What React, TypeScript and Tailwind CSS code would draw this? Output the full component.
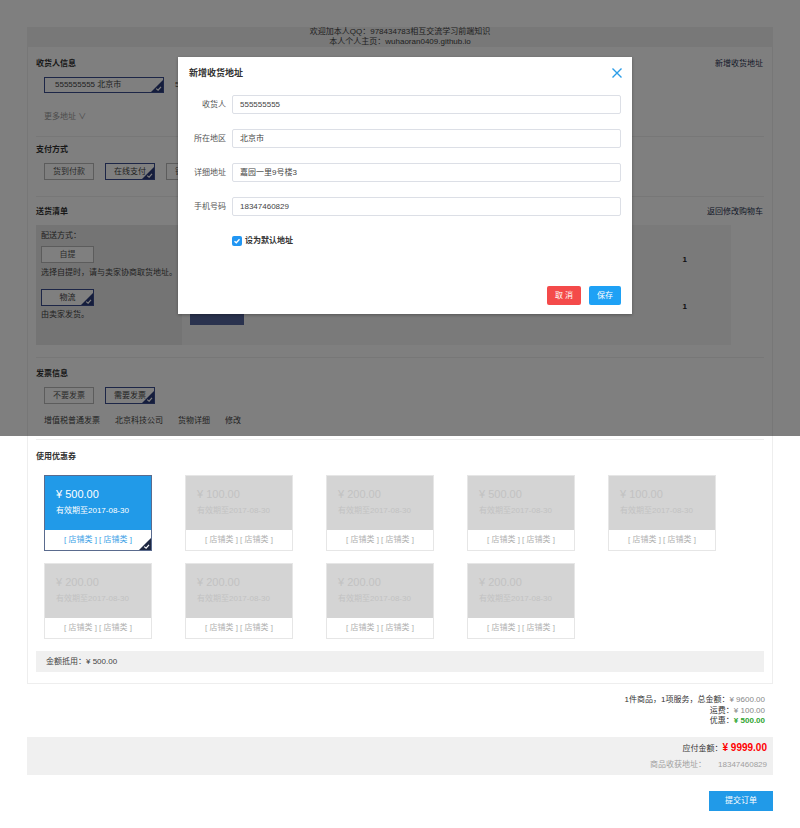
import React from 'react';

const Corner = ({ color = '#2b3a78' }: { color?: string }) => (
  <svg className="absolute bottom-0 right-0" width="12" height="12" viewBox="0 0 12 12">
    <polygon points="12,0 12,12 0,12" fill={color} />
    <polyline points="5.2,8.6 7.1,10.2 10,6.8" fill="none" stroke="#fff" strokeWidth="1.2" />
  </svg>
);

const OptionBtn = ({ label, active = false, w = 'w-[50px]' }: { label: string; active?: boolean; w?: string }) => (
  <div
    className={`relative ${w} h-[17px] shrink-0 border text-center leading-[15px] text-[8px] ${
      active ? 'border-[#3b4d8f] text-[#444]' : 'border-[#b8b8b8] text-[#555]'
    } bg-white`}
  >
    {label}
    {active && <Corner />}
  </div>
);

const coupons = [
  { amount: '500.00', active: true },
  { amount: '100.00' },
  { amount: '200.00' },
  { amount: '500.00' },
  { amount: '100.00' },
  { amount: '200.00' },
  { amount: '200.00' },
  { amount: '200.00' },
  { amount: '200.00' },
];

const Coupon = ({ amount, active }: { amount: string; active?: boolean }) => (
  <div
    className={`relative w-[108px] h-[76px] border flex flex-col ${
      active ? 'border-[#5a6b8e]' : 'border-[#e6e6e6]'
    }`}
  >
    <div className={`h-[54px] pl-[11px] pt-[11px] ${active ? 'bg-[#219ae8] text-white' : 'bg-[#d4d4d4] text-[#c2c2c2]'}`}>
      <div className="text-[11px] leading-[14px]">¥ {amount}</div>
      <div className="text-[8px] leading-[10px] mt-[5px]">有效期至2017-08-30</div>
    </div>
    <div className={`flex-1 bg-white text-center text-[8px] leading-[20px] ${active ? 'text-[#3d9fe6]' : 'text-[#b0b0b0]'}`}>
      [ 店铺类 ] [ 店铺类 ]
    </div>
    {active && <Corner color="#1e2842" />}
  </div>
);

const FormRow = ({ label, value }: { label: string; value: string }) => (
  <div className="flex items-center">
    <div className="w-[48px] text-right text-[8px] text-[#555]">{label}</div>
    <div className="ml-[6px] w-[389px] h-[19px] border border-[#dcdfe6] rounded-[2px] pl-[7px] text-[8px] leading-[17px] text-[#444]">
      {value}
    </div>
  </div>
);

export default function App() {
  return (
    <div className="relative h-[828px] w-[800px] bg-white text-[#333] text-[8px] font-['Liberation_Sans','Noto_Sans_CJK_SC',sans-serif]">
      <div className="pt-[27px] px-[27px]">
        {/* top banner */}
        <div className="h-[20px] bg-[#f0f0f0] text-center text-[8px] leading-[10px] text-[#444]">
          <div>欢迎加本人QQ：978434783相互交流学习前端知识</div>
          <div>本人个人主页：wuhaoran0409.github.io</div>
        </div>

        <div className="border border-t-0 border-[#eeeeee]">
          {/* 收货人信息 */}
          <div className="mx-[8px] pt-[12px] pb-[14px] border-b border-[#eeeeee]">
            <div className="flex justify-between leading-[10px]">
              <span className="font-bold">收货人信息</span>
              <span className="text-[#2b3352] mr-[1px]">新增收货地址</span>
            </div>
            <div className="flex mt-[8px] ml-[8px]">
              <div className="relative w-[120px] h-[16px] border border-[#3b4d8f] pl-[10px] leading-[14px] text-[#444]">
                555555555 北京市
                <Corner />
              </div>
              <div className="w-[120px] h-[16px] border border-transparent pl-[10px] leading-[14px] text-[#444]">
                555555555 北京市
              </div>
            </div>
            <div className="mt-[19px] ml-[8px] leading-[10px] text-[#9a9a9a]">更多地址 ∨</div>
          </div>

          {/* 支付方式 */}
          <div className="mx-[8px] pt-[8px] pb-[16px] border-b border-[#eeeeee]">
            <div className="font-bold leading-[10px]">支付方式</div>
            <div className="flex gap-[11px] mt-[8px] ml-[8px]">
              <OptionBtn label="货到付款" />
              <OptionBtn label="在线支付" active />
              <OptionBtn label="银联支付" />
            </div>
          </div>

          {/* 送货清单 */}
          <div className="mx-[8px] pt-[10px] pb-[12px] border-b border-[#eeeeee]">
            <div className="flex justify-between leading-[10px]">
              <span className="font-bold">送货清单</span>
              <span className="text-[#2b3352] mr-[1px]">返回修改购物车</span>
            </div>
            <div className="flex mt-[8px] h-[120px]">
              <div className="w-[146px] bg-[#e9e9e9] pl-[5px] pt-[6px] leading-[10px] text-[#444]">
                <div>配送方式：</div>
                <div className="mt-[5px]">
                  <OptionBtn label="自提" w="w-[53px]" />
                </div>
                <div className="mt-[5px]">选择自提时，请与卖家协商取货地址。</div>
                <div className="mt-[11px]">
                  <OptionBtn label="物流" w="w-[53px]" active />
                </div>
                <div className="mt-[4px]">由卖家发货。</div>
              </div>
              <div className="w-[549px] bg-[#f4f4f4] pl-[8px] pt-[17px] flex flex-col gap-[11px]">
                {[0, 1].map((i) => (
                  <div key={i} className="flex items-center h-[36px]">
                    <div className="w-[54px] h-[36px] bg-[#54649c]" />
                    <div className="ml-auto mr-[44px] font-bold text-[#222]">1</div>
                  </div>
                ))}
              </div>
            </div>
          </div>

          {/* 发票信息 */}
          <div className="mx-[8px] pt-[11px] pb-[13px] border-b border-[#eeeeee]">
            <div className="font-bold leading-[10px]">发票信息</div>
            <div className="flex gap-[11px] mt-[8px] ml-[8px]">
              <OptionBtn label="不要发票" />
              <OptionBtn label="需要发票" active />
            </div>
            <div className="flex gap-[15px] mt-[12px] ml-[8px] leading-[10px] text-[#444]">
              <span>增值税普通发票</span>
              <span>北京科技公司</span>
              <span>货物详细</span>
              <span>修改</span>
            </div>
          </div>

          {/* 使用优惠券 */}
          <div className="mx-[8px] pt-[12px] pb-[11px]">
            <div className="font-bold leading-[10px]">使用优惠券</div>
            <div className="grid grid-cols-[repeat(5,108px)] gap-x-[33px] gap-y-[12px] mt-[13px] ml-[8px]">
              {coupons.map((c, i) => (
                <Coupon key={i} amount={c.amount} active={c.active} />
              ))}
            </div>
            <div className="mt-[12px] h-[21px] bg-[#f0f0f0] pl-[10px] leading-[21px] text-[#444]">金额抵用：¥ 500.00</div>
          </div>
        </div>

        {/* summary */}
        <div className="pt-[11px] pr-[8px] text-right leading-[10.5px]">
          <div>
            1件商品，1项服务，总金额：<span className="text-[#888]">¥ 9600.00</span>
          </div>
          <div>
            运费：<span className="text-[#888]">¥ 100.00</span>
          </div>
          <div>
            优惠：<span className="text-[#2fa52f] font-bold">¥ 500.00</span>
          </div>
        </div>

        <div className="mt-[10px] h-[38px] bg-[#f0f0f0] pt-[5px] pr-[6px] text-right">
          <div className="leading-[12px]">
            应付金额：<span className="text-[#ff0000] font-bold text-[10px]">¥ 9999.00</span>
          </div>
          <div className="mt-[5px] leading-[10px] text-[#a0a0a0]">
            商品收获地址：<span className="ml-[12px]">18347460829</span>
          </div>
        </div>

        <div className="flex justify-end mt-[16px]">
          <div className="w-[64px] h-[20px] bg-[#219ae8] text-white text-center leading-[20px]">提交订单</div>
        </div>
      </div>

      {/* overlay */}
      <div className="absolute left-0 top-0 w-full h-[436px] bg-black/50" />

      {/* modal */}
      <div className="absolute left-[178px] top-[57px] w-[454px] h-[257px] bg-white shadow-[0_1px_3px_rgba(0,0,0,0.3)]">
        <div className="flex items-center justify-between pl-[11px] pr-[9px] pt-[10px]">
          <span className="text-[9px] font-bold text-[#333] leading-[12px]">新增收货地址</span>
          <svg width="12" height="12" viewBox="0 0 12 12">
            <path d="M1.5 1.5 L10.5 10.5 M10.5 1.5 L1.5 10.5" stroke="#2a9de8" strokeWidth="1.4" fill="none" />
          </svg>
        </div>
        <div className="flex flex-col gap-[15px] mt-[16px]">
          <FormRow label="收货人" value="555555555" />
          <FormRow label="所在地区" value="北京市" />
          <FormRow label="详细地址" value="嘉园一里9号楼3" />
          <FormRow label="手机号码" value="18347460829" />
        </div>
        <div className="flex items-center ml-[54px] mt-[20px]">
          <div className="w-[10px] h-[10px] rounded-[2px] bg-[#2196f3] flex items-center justify-center">
            <svg width="8" height="8" viewBox="0 0 8 8">
              <polyline points="1.5,4.2 3.3,5.8 6.5,2.3" fill="none" stroke="#fff" strokeWidth="1.3" />
            </svg>
          </div>
          <span className="ml-[3px] font-bold text-[#333] leading-[10px]">设为默认地址</span>
        </div>
        <div className="flex justify-end gap-[8px] pr-[11px] mt-[40px]">
          <div className="w-[34px] h-[19px] rounded-[2px] bg-[#f44a4a] text-white text-center leading-[19px]">取 消</div>
          <div className="w-[32px] h-[19px] rounded-[2px] bg-[#1ea1f5] text-white text-center leading-[19px]">保存</div>
        </div>
      </div>
    </div>
  );
}
